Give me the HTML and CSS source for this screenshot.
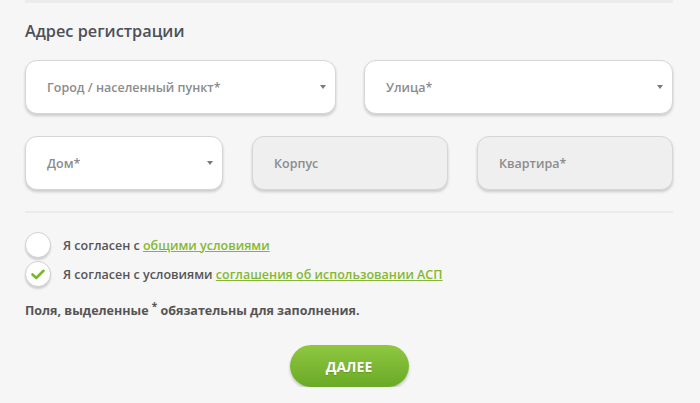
FILE: index.html
```html
<!DOCTYPE html>
<html lang="ru">
<head>
<meta charset="utf-8">
<link rel="stylesheet" href="styles.css">
</head>
<body>
<div class="page">
  <div class="topline"></div>
  <h2 class="title">Адрес регистрации</h2>
  <div class="row row-2">
    <div class="field"><span class="ph">Город / населенный пункт*</span><span class="arrow"></span></div>
    <div class="field"><span class="ph">Улица*</span><span class="arrow"></span></div>
  </div>
  <div class="row row-3">
    <div class="field"><span class="ph">Дом*</span><span class="arrow"></span></div>
    <div class="field disabled"><span class="ph">Корпус</span></div>
    <div class="field disabled"><span class="ph">Квартира*</span></div>
  </div>
  <div class="divider"></div>
  <div class="checks">
    <label class="check"><span class="box"></span><span class="ctext">Я согласен с <a class="link" href="#">общими условиями</a></span></label>
    <label class="check"><span class="box checked"><svg width="14" height="11" viewBox="0 0 14 11"><path d="M1.5 5.5 L5.2 9 L12.5 1.8" fill="none" stroke="#7ab829" stroke-width="2.6" stroke-linecap="round" stroke-linejoin="round"/></svg></span><span class="ctext">Я согласен с условиями <a class="link" href="#">соглашения об использовании АСП</a></span></label>
  </div>
  <p class="note">Поля, выделенные <sup class="star">*</sup> обязательны для заполнения.</p>
  <div class="actions"><button class="btn" type="button">ДАЛЕЕ</button></div>
</div>
</body>
</html>
```
FILE: styles.css
```css
html, body {
  margin: 0;
  padding: 0;
  background: #f6f6f6;
}
body {
  font-family: "Open Sans", "Noto Sans", sans-serif;
  color: #555;
}
.page {
  width: 648px;
  margin-left: 25px;
}
.topline {
  height: 3px;
  background: #ebebeb;
}
.title {
  margin: 18px 0 19px;
  font-size: 16.3px;
  line-height: 20px;
  font-weight: 600;
  color: #4b505a;
}
.row {
  display: grid;
  gap: 28px;
}
.row-2 {
  grid-template-columns: 311px 1fr;
  margin-bottom: 22px;
}
.row-3 {
  grid-template-columns: 198px 1fr 1fr;
  gap: 29px;
}
.field {
  height: 54px;
  box-sizing: border-box;
  background: #fff;
  border: 1px solid #d6d6d6;
  border-radius: 12px;
  box-shadow: 0 2px 3px rgba(0,0,0,0.18);
  display: flex;
  align-items: center;
  padding: 0 9px 0 21px;
}
.field.disabled {
  background: #efefef;
}
.ph {
  flex: 1;
  font-size: 12.5px;
  font-weight: 600;
  color: #8c8c8c;
}
.arrow {
  width: 0;
  height: 0;
  border-left: 3.5px solid transparent;
  border-right: 3.5px solid transparent;
  border-top: 4px solid #7a7a7a;
}
.divider {
  height: 2px;
  background: #ebebeb;
  margin-top: 21px;
}
.checks {
  margin-top: 19px;
  display: flex;
  flex-direction: column;
  gap: 3px;
}
.check {
  display: flex;
  align-items: center;
  height: 26px;
}
.box {
  width: 26px;
  height: 26px;
  box-sizing: border-box;
  border-radius: 50%;
  background: #fff;
  border: 1px solid #d2d2d2;
  box-shadow: 0 2px 2px rgba(0,0,0,0.16);
  display: flex;
  align-items: center;
  justify-content: center;
  margin-right: 12px;
}
.ctext {
  font-size: 12.5px;
  font-weight: 600;
  color: #555;
}
.link {
  color: #84b832;
  text-decoration: underline;
}
.note {
  margin: 14px 0 0;
  font-size: 12.5px;
  line-height: 20px;
  font-weight: 700;
  color: #555;
}
.star {
  font-size: 10px;
  line-height: 0;
}
.actions {
  margin-top: 24px;
  display: flex;
  justify-content: center;
}
.btn {
  width: 119px;
  height: 42px;
  border: none;
  border-radius: 21px;
  background: linear-gradient(#8fc740, #6aaa26);
  box-shadow: 0 2px 3px rgba(0,0,0,0.22);
  color: #fff;
  font-family: "Open Sans", sans-serif;
  font-size: 14px;
  font-weight: 700;
  text-shadow: 0 1px 1px rgba(0,0,0,0.15);
}
```
